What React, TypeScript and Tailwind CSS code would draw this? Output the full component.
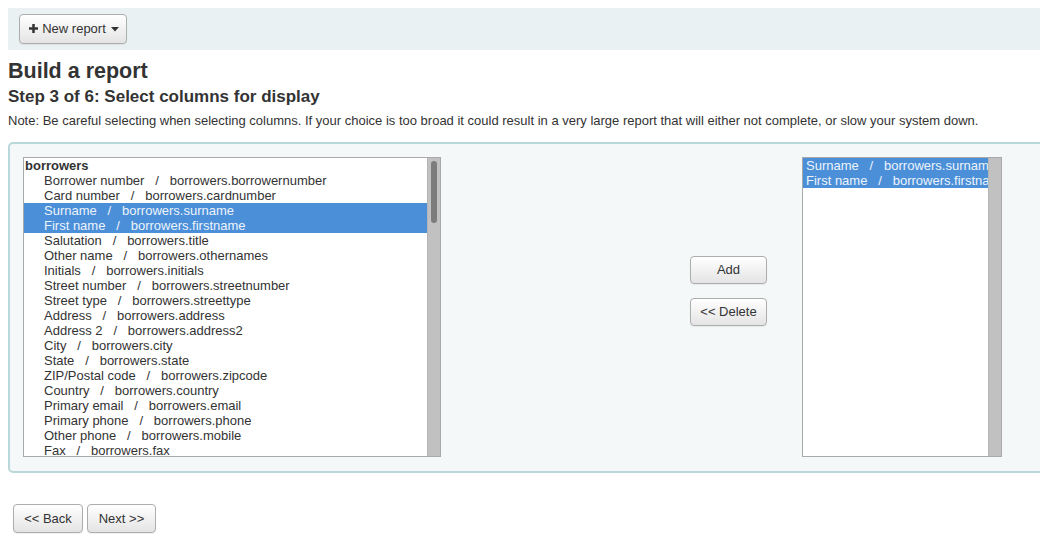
const columns: [string, string][] = [
  ['Borrower number', 'borrowers.borrowernumber'],
  ['Card number', 'borrowers.cardnumber'],
  ['Surname', 'borrowers.surname'],
  ['First name', 'borrowers.firstname'],
  ['Salutation', 'borrowers.title'],
  ['Other name', 'borrowers.othernames'],
  ['Initials', 'borrowers.initials'],
  ['Street number', 'borrowers.streetnumber'],
  ['Street type', 'borrowers.streettype'],
  ['Address', 'borrowers.address'],
  ['Address 2', 'borrowers.address2'],
  ['City', 'borrowers.city'],
  ['State', 'borrowers.state'],
  ['ZIP/Postal code', 'borrowers.zipcode'],
  ['Country', 'borrowers.country'],
  ['Primary email', 'borrowers.email'],
  ['Primary phone', 'borrowers.phone'],
  ['Other phone', 'borrowers.mobile'],
  ['Fax', 'borrowers.fax'],
];

const selectedCols = ['borrowers.surname', 'borrowers.firstname'];

const btn =
  'rounded-[4px] border border-[#adadad] bg-gradient-to-b from-white to-[#e4e4e4] text-[13px] text-[#333] shadow-[inset_0_1px_0_rgba(255,255,255,0.2),0_1px_1px_rgba(0,0,0,0.06)]';

function Label({ name, field }: { name: string; field: string }) {
  return (
    <span className="whitespace-pre">
      {name}
      {'   /   '}
      {field}
    </span>
  );
}

function Scrollbar({ thumb }: { thumb?: boolean }) {
  return (
    <div className="w-[13px] shrink-0 border-l border-[#b5b5b5] bg-[#c1c1c1] px-[3px] pt-[3px]">
      {thumb && <div className="h-[62px] w-[6px] rounded-full bg-[#7c7c7c]" />}
    </div>
  );
}

export default function App() {
  return (
    <div className="h-[537px] w-[1040px] overflow-hidden bg-white font-['Liberation_Sans',Arial,sans-serif] text-[#333]">
      {/* toolbar */}
      <div className="ml-2 mt-2 flex h-[42px] items-center bg-[#e9f1f3] pl-[11px]">
        <button className={`${btn} flex h-[30px] w-[108px] items-center justify-center gap-[4px] pl-[2px] text-[11.5px]`}>
          <svg width="9" height="9" viewBox="0 0 10 10" className="mt-[-1px]">
            <path d="M3.6 0h2.8v3.6H10v2.8H6.4V10H3.6V6.4H0V3.6h3.6z" fill="#333" />
          </svg>
          <span>New report</span>
          <svg width="8" height="5" viewBox="0 0 8 5" className="ml-[1px]">
            <path d="M0 0h8L4 4.5z" fill="#333" />
          </svg>
        </button>
      </div>

      <h1 className="ml-2 mt-[9px] text-[21.5px] font-bold leading-[24px]">Build a report</h1>
      <h3 className="ml-2 mt-[4px] text-[17px] font-bold leading-[20px]">Step 3 of 6: Select columns for display</h3>
      <p className="ml-2 mt-[6px] text-[13px] leading-[16px]">
        Note: Be careful selecting when selecting columns. If your choice is too broad it could result in a very large
        report that will either not complete, or slow your system down.
      </p>

      {/* fieldset */}
      <div className="ml-2 mt-[13px] flex h-[331px] w-[1045px] rounded-[5px] border-2 border-[#b9d8d9] bg-[#f4f8f9] pl-[13px] pt-[13px]">
        <div className="flex h-[300px] w-[418px] border border-[#a9a9a9] bg-white">
          <div className="flex-1 overflow-hidden text-[13px] leading-[15px]">
            <div className="pl-px font-bold">borrowers</div>
            {columns.map(([name, field]) => {
              const sel = selectedCols.includes(field);
              return (
                <div
                  key={field}
                  className={sel ? 'bg-[#4a8fd8] pl-5 text-[#eef3fb]' : 'pl-5'}
                >
                  <Label name={name} field={field} />
                </div>
              );
            })}
          </div>
          <Scrollbar thumb />
        </div>

        <div className="ml-[249px] flex w-[77px] flex-col pt-[99px]">
          <button className={`${btn} h-[28px] w-[77px]`}>Add</button>
          <button className={`${btn} mt-[14px] h-[28px] w-[77px]`}>&lt;&lt; Delete</button>
        </div>

        <div className="ml-[35px] flex h-[300px] w-[200px] border border-[#a9a9a9] bg-white">
          <div className="flex-1 overflow-hidden text-[13px] leading-[15px]">
            {columns
              .filter(([, f]) => selectedCols.includes(f))
              .map(([name, field]) => (
                <div key={field} className="overflow-hidden bg-[#4a8fd8] pl-[3px] text-[#eef3fb]">
                  <Label name={name} field={field} />
                </div>
              ))}
          </div>
          <Scrollbar />
        </div>
      </div>

      {/* footer */}
      <div className="ml-[13px] mt-[31px] flex gap-[4px]">
        <button className={`${btn} h-[29px] w-[70px]`}>&lt;&lt; Back</button>
        <button className={`${btn} h-[29px] w-[69px]`}>Next &gt;&gt;</button>
      </div>
    </div>
  );
}
